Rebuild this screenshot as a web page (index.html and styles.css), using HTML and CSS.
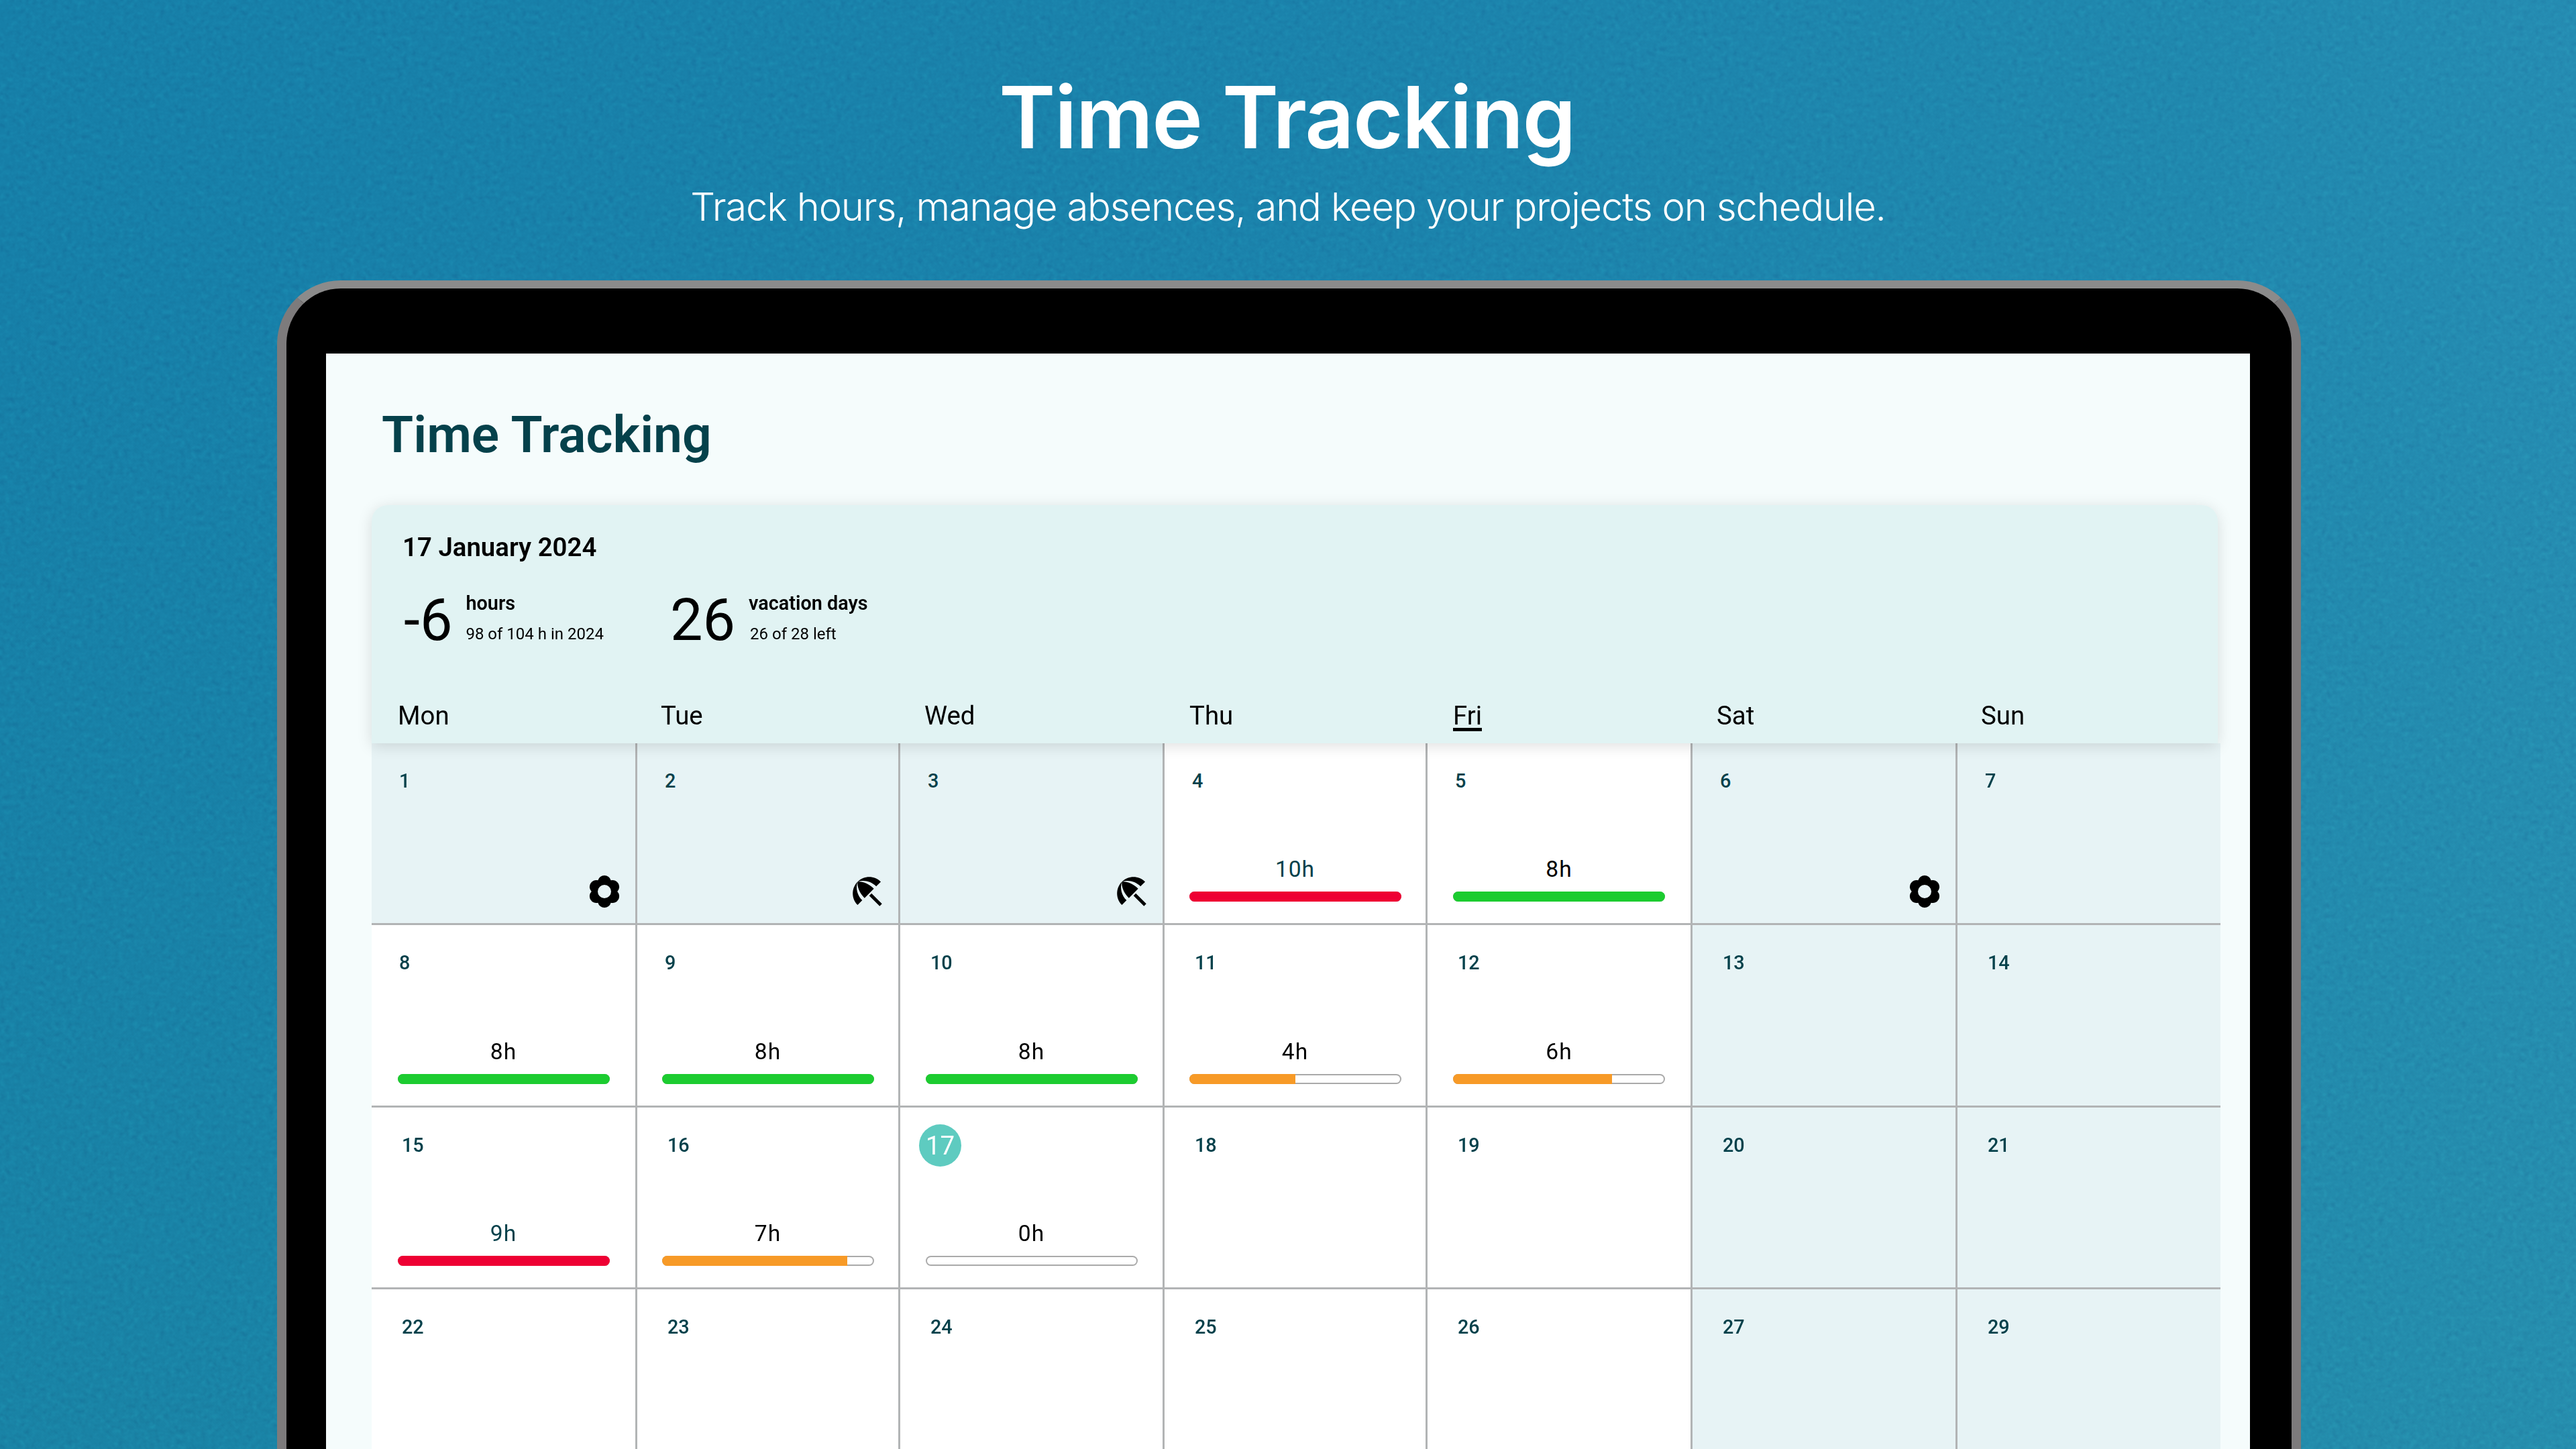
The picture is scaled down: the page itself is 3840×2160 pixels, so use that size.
FILE: index.html
```html
<!DOCTYPE html>
<html lang="en">

<head>
  <meta charset="UTF-8">
  <title>Time Tracking</title>
  <link rel="stylesheet" href="styles.css">
</head>

<body>
  <svg class="grain" width="3840" height="2160" aria-hidden="true">
    <filter id="grainFilter" color-interpolation-filters="sRGB">
      <feTurbulence type="fractalNoise" baseFrequency="0.13" numOctaves="2" seed="4" />
      <feColorMatrix type="matrix" values="0.33 0.33 0.33 0 0  0.33 0.33 0.33 0 0  0.33 0.33 0.33 0 0  0 0 0 0 1" />
    </filter>
    <rect width="3840" height="2160" filter="url(#grainFilter)" />
  </svg>

  <svg width="0" height="0" class="icon-defs" aria-hidden="true">
    <symbol id="flower" viewBox="0 0 48 48">
      <path fill-rule="evenodd" d="M14.37 7.32A10 10 0 0 1 33.63 7.32A10 10 0 0 1 43.26 24A10 10 0 0 1 33.63 40.68A10 10 0 0 1 14.37 40.68A10 10 0 0 1 4.74 24A10 10 0 0 1 14.37 7.32ZM24 14a10 10 0 1 0 0 20a10 10 0 1 0 0-20Z" />
    </symbol>
    <symbol id="umbrella" viewBox="0 0 24 24">
      <path d="M13.127 14.56l1.43-1.43 6.44 6.443L19.57 21zm4.293-5.73l2.86-2.86c-3.95-3.95-10.35-3.96-14.3-.02 3.93-1.3 8.31-.25 11.44 2.88zM5.95 5.98c-3.94 3.95-3.93 10.35.02 14.3l2.86-2.86C5.7 14.29 4.65 9.91 5.95 5.98zm.02-.02l-.01.01c-.38 3.01 1.17 6.88 4.3 10.02l5.73-5.73c-3.13-3.13-7.01-4.68-10.02-4.3z" />
    </symbol>
  </svg>

  <header class="hero">
    <h1>Time Tracking</h1>
    <p>Track hours, manage absences, and keep your projects on schedule.</p>
  </header>

  <div class="device">
    <main class="screen">
      <h2 class="page-title">Time Tracking</h2>

      <section class="calendar">
        <div class="summary">
          <div class="today">17 January 2024</div>
          <div class="stats">
            <div class="stat">
              <span class="stat-value">-6</span>
              <div class="stat-text">
                <strong>hours</strong>
                <span>98 of 104 h in 2024</span>
              </div>
            </div>
            <div class="stat stat-vacation">
              <span class="stat-value">26</span>
              <div class="stat-text">
                <strong>vacation days</strong>
                <span class="stat-sub">26 of 28 left</span>
              </div>
            </div>
          </div>
          <div class="weekdays">
            <div>Mon</div>
            <div>Tue</div>
            <div>Wed</div>
            <div>Thu</div>
            <div><span class="current-day">Fri</span></div>
            <div>Sat</div>
            <div>Sun</div>
          </div>
        </div>

        <div class="month">
          <div class="cell off"><span class="num single">1</span><svg class="icon flower"><use href="#flower" /></svg></div>
          <div class="cell off"><span class="num single">2</span><svg class="icon umbrella"><use href="#umbrella" /></svg></div>
          <div class="cell off"><span class="num single">3</span><svg class="icon umbrella"><use href="#umbrella" /></svg></div>
          <div class="cell"><span class="num single">4</span>
            <div class="work"><span class="hours over">10h</span><div class="bar"><div class="fill red full"></div></div></div>
          </div>
          <div class="cell"><span class="num single">5</span>
            <div class="work"><span class="hours">8h</span><div class="bar"><div class="fill green full"></div></div></div>
          </div>
          <div class="cell off"><span class="num single">6</span><svg class="icon flower"><use href="#flower" /></svg></div>
          <div class="cell off"><span class="num single">7</span></div>

          <div class="cell"><span class="num single">8</span>
            <div class="work"><span class="hours">8h</span><div class="bar"><div class="fill green full"></div></div></div>
          </div>
          <div class="cell"><span class="num single">9</span>
            <div class="work"><span class="hours">8h</span><div class="bar"><div class="fill green full"></div></div></div>
          </div>
          <div class="cell"><span class="num">10</span>
            <div class="work"><span class="hours">8h</span><div class="bar"><div class="fill green full"></div></div></div>
          </div>
          <div class="cell"><span class="num">11</span>
            <div class="work"><span class="hours">4h</span><div class="bar"><div class="fill orange" style="width: 50%"></div></div></div>
          </div>
          <div class="cell"><span class="num">12</span>
            <div class="work"><span class="hours">6h</span><div class="bar"><div class="fill orange" style="width: 75%"></div></div></div>
          </div>
          <div class="cell off"><span class="num">13</span></div>
          <div class="cell off"><span class="num">14</span></div>

          <div class="cell"><span class="num">15</span>
            <div class="work"><span class="hours over">9h</span><div class="bar"><div class="fill red full"></div></div></div>
          </div>
          <div class="cell"><span class="num">16</span>
            <div class="work"><span class="hours">7h</span><div class="bar"><div class="fill orange" style="width: 87.5%"></div></div></div>
          </div>
          <div class="cell"><span class="num now">17</span>
            <div class="work"><span class="hours">0h</span><div class="bar"></div></div>
          </div>
          <div class="cell"><span class="num">18</span></div>
          <div class="cell"><span class="num">19</span></div>
          <div class="cell off"><span class="num">20</span></div>
          <div class="cell off"><span class="num">21</span></div>

          <div class="cell"><span class="num">22</span></div>
          <div class="cell"><span class="num">23</span></div>
          <div class="cell"><span class="num">24</span></div>
          <div class="cell"><span class="num">25</span></div>
          <div class="cell"><span class="num">26</span></div>
          <div class="cell off"><span class="num">27</span></div>
          <div class="cell off"><span class="num">29</span></div>
        </div>
      </section>
    </main>
  </div>
</body>

</html>
```

FILE: styles.css
```css
html,
body {
  height: 2160px;
}

body {
  margin: 0;
  overflow: hidden;
  position: relative;
  font-family: Roboto, sans-serif;
  background:
    linear-gradient(to bottom, rgba(40, 150, 150, 0) 20%, rgba(40, 150, 150, 0.16) 100%),
    linear-gradient(to right, #167fa8 0%, #1b83ac 55%, #2088ae 85%, #258cb2 100%);
}

.grain {
  position: absolute;
  top: 0;
  left: 0;
  opacity: 0.16;
  mix-blend-mode: overlay;
}

.icon-defs {
  position: absolute;
}

.hero {
  position: relative;
  text-align: center;
  color: #fff;
  padding-top: 95px;
  height: 323px;
}

.hero h1 {
  margin: 0;
  padding-right: 3px;
  font-family: Inter, sans-serif;
  font-size: 128px;
  line-height: 160px;
  font-weight: 600;
  letter-spacing: -1.7px;
}

.hero p {
  margin: 18px 0 0;
  font-family: Inter, sans-serif;
  font-size: 58px;
  line-height: 70px;
  font-weight: 300;
  letter-spacing: -1.2px;
}

.device {
  position: relative;
  margin-left: 413px;
  width: 3017px;
  height: 1800px;
  box-sizing: border-box;
  padding: 97px 62px 0 59px;
  background: #000;
  border: 14px solid #7d7b7c;
  border-top: 12px solid #8b8b8b;
  border-bottom: 0;
  border-radius: 95px 95px 0 0;
}

.screen {
  height: 100%;
  background: #f5fcfc;
  overflow: hidden;
}

.page-title {
  margin: 0;
  padding: 76px 0 0 83px;
  height: 226px;
  box-sizing: border-box;
  font-size: 76.8px;
  line-height: 90px;
  font-weight: 600;
  color: #05414b;
}

.calendar {
  margin-left: 68px;
  width: 2756px;
}

.summary {
  position: relative;
  z-index: 1;
  width: 2752px;
  height: 355px;
  box-sizing: border-box;
  padding-top: 40px;
  background: #e1f3f3;
  border-radius: 24px 24px 0 0;
  box-shadow: 0 4px 22px rgba(0, 0, 0, 0.13);
  display: flex;
  flex-direction: column;
}

.today {
  padding-left: 46px;
  font-size: 38.4px;
  line-height: 46px;
  font-weight: 600;
  color: #000;
}

.stats {
  display: flex;
  padding-left: 48px;
  margin-top: 36px;
}

.stat {
  display: flex;
  width: 397px;
  gap: 20px;
}

.stat-value {
  font-size: 86.4px;
  line-height: 100px;
  font-weight: 400;
  color: #000;
}

.stat-text {
  display: flex;
  flex-direction: column;
  padding-top: 6px;
  font-size: 24px;
  color: #000;
}

.stat-text strong {
  font-size: 28.8px;
  line-height: 36px;
  font-weight: 600;
}

.stat-text span {
  margin-top: 10px;
  line-height: 36px;
}

.stat-text .stat-sub {
  margin-left: 2px;
}

.weekdays {
  margin-top: auto;
  display: grid;
  grid-template-columns: 392px 393px 395px 393px 393px 394px 292px;
  height: 64px;
  font-size: 38.4px;
  line-height: 46px;
  color: #000;
}

.weekdays div {
  padding-left: 39px;
}

.current-day {
  display: inline-block;
  line-height: 36px;
  border-bottom: 5px solid #000;
}

.month {
  display: grid;
  grid-template-columns: 396px 392px 394px 392px 395px 395px 392px;
  grid-template-rows: 271px 272px 271px 400px;
}

.cell {
  display: flex;
  flex-direction: column;
  box-sizing: border-box;
  padding: 25px 37px 32px 37px;
  background: #fff;
  border-right: 3px solid #b2b4b5;
  border-bottom: 3px solid #b2b4b5;
}

.cell:nth-child(7n) {
  border-right: 0;
}

.cell.off {
  background: #e7f3f5;
}

.num {
  display: block;
  height: 63px;
  padding-left: 8px;
  font-size: 28.8px;
  line-height: 63px;
  font-weight: 500;
  color: #05414b;
}

.num.single {
  padding-left: 4px;
}

.num.now {
  box-sizing: border-box;
  width: 63px;
  padding: 0;
  margin-left: -9px;
  border-radius: 50%;
  background: #5ecbc0;
  color: #fff;
  font-size: 38.4px;
  font-weight: 400;
  text-align: center;
}

.icon {
  margin-top: auto;
  align-self: flex-end;
  display: block;
  fill: #000;
}

.icon.flower {
  width: 48px;
  height: 48px;
  margin-right: -15px;
  margin-bottom: -9px;
}

.icon.umbrella {
  width: 58px;
  height: 58px;
  margin-right: -20px;
  margin-bottom: -14px;
}

.work {
  margin-top: auto;
  display: flex;
  flex-direction: column;
  align-items: center;
}

.hours {
  font-size: 33.6px;
  line-height: 40px;
  margin-bottom: 13px;
  letter-spacing: 1px;
  color: #000;
}

.hours.over {
  color: #05414b;
}

.bar {
  width: 316px;
  height: 15px;
  border-radius: 8px;
  background: #fff;
  box-shadow: inset 0 0 0 2px #aaa;
}

.fill {
  height: 100%;
  border-radius: 8px 0 0 8px;
}

.fill.full {
  width: 100%;
  border-radius: 8px;
}

.red {
  background: #ee0033;
}

.green {
  background: #1ccc30;
}

.orange {
  background: #f79a27;
}
```
